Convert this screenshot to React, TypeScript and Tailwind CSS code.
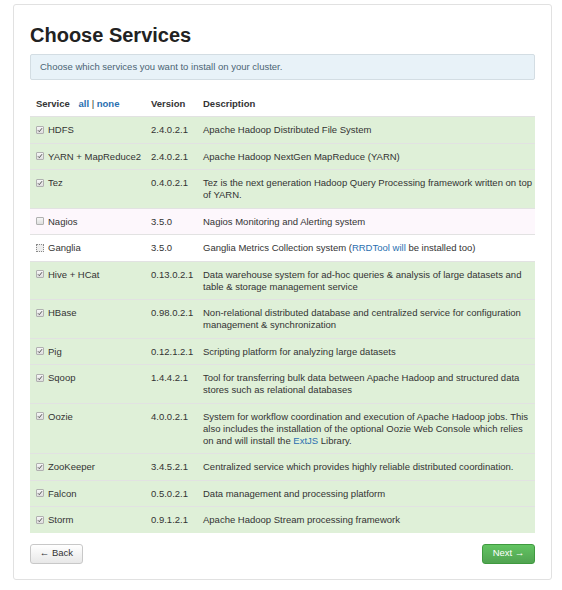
import React from "react";

type Row = {
  name: string;
  version: string;
  desc: React.ReactNode;
  state: "on" | "off" | "mixed";
};

const link = "text-[#2a6fb0]";

const rows: Row[] = [
  { name: "HDFS", version: "2.4.0.2.1", desc: "Apache Hadoop Distributed File System", state: "on" },
  { name: "YARN + MapReduce2", version: "2.4.0.2.1", desc: "Apache Hadoop NextGen MapReduce (YARN)", state: "on" },
  {
    name: "Tez",
    version: "0.4.0.2.1",
    desc: "Tez is the next generation Hadoop Query Processing framework written on top of YARN.",
    state: "on",
  },
  { name: "Nagios", version: "3.5.0", desc: "Nagios Monitoring and Alerting system", state: "off" },
  {
    name: "Ganglia",
    version: "3.5.0",
    desc: (
      <>
        Ganglia Metrics Collection system (<span className={link}>RRDTool</span>{" "}
        <span className={link}>will</span> be installed too)
      </>
    ),
    state: "mixed",
  },
  {
    name: "Hive + HCat",
    version: "0.13.0.2.1",
    desc: "Data warehouse system for ad-hoc queries & analysis of large datasets and table & storage management service",
    state: "on",
  },
  {
    name: "HBase",
    version: "0.98.0.2.1",
    desc: "Non-relational distributed database and centralized service for configuration management & synchronization",
    state: "on",
  },
  { name: "Pig", version: "0.12.1.2.1", desc: "Scripting platform for analyzing large datasets", state: "on" },
  {
    name: "Sqoop",
    version: "1.4.4.2.1",
    desc: "Tool for transferring bulk data between Apache Hadoop and structured data stores such as relational databases",
    state: "on",
  },
  {
    name: "Oozie",
    version: "4.0.0.2.1",
    desc: (
      <>
        System for workflow coordination and execution of Apache Hadoop jobs. This also includes the
        installation of the optional Oozie Web Console which relies on and will install the{" "}
        <span className={link}>ExtJS</span> Library.
      </>
    ),
    state: "on",
  },
  {
    name: "ZooKeeper",
    version: "3.4.5.2.1",
    desc: "Centralized service which provides highly reliable distributed coordination.",
    state: "on",
  },
  { name: "Falcon", version: "0.5.0.2.1", desc: "Data management and processing platform", state: "on" },
  { name: "Storm", version: "0.9.1.2.1", desc: "Apache Hadoop Stream processing framework", state: "on" },
];

function Check({ state }: { state: Row["state"] }) {
  if (state === "mixed") {
    return (
      <span className="mr-[4px] inline-block h-[8px] w-[8px] border border-dotted border-[#888] bg-[#eee] align-[-0.5px]" />
    );
  }
  return (
    <span className="mr-[4px] inline-block h-[8px] w-[8px] rounded-[1px] border border-[#b0b0b0] bg-gradient-to-b from-[#f6f6f6] to-[#dedede] align-[-0.5px]">
      {state === "on" && (
        <svg viewBox="0 0 8 8" className="block h-[6px] w-[6px]">
          <path d="M1.3 4.4 L3.1 6.2 L6.7 1.6" fill="none" stroke="#444" strokeWidth="1.2" />
        </svg>
      )}
    </span>
  );
}

function rowBg(state: Row["state"]) {
  if (state === "on") return "bg-[#dff0d8]";
  if (state === "off") return "bg-[#fdf7fc]";
  return "bg-white";
}

export default function App() {
  return (
    <div className="min-h-[590px] bg-white pt-[4px] font-['Liberation_Sans',Arial,sans-serif] text-[#333]">
      <div className="mx-[13px] w-[539px] rounded-[3px] border border-[#e1e1e1] px-[16px] pb-[15px] pt-[17px]">
        <h2 className="text-[20px] font-bold leading-[26px] text-[#222]">Choose Services</h2>

        <div className="mt-[6px] rounded-[2px] border border-[#d3dde3] bg-[#e8f2f8] px-[9px] py-[6px] text-[9.5px] leading-[12px] text-[#4b6474]">
          Choose which services you want to install on your cluster.
        </div>

        <table className="mt-[12px] w-full table-fixed border-collapse text-[9.5px] leading-[12px]">
          <colgroup>
            <col className="w-[115px]" />
            <col className="w-[52px]" />
            <col />
          </colgroup>
          <thead>
            <tr className="text-left font-bold text-[#333]">
              <th className="px-[6px] pb-[6px] pt-[6px] font-bold">
                Service <span className={`ml-[6px] ${link}`}>all</span>{" "}
                <span className="font-normal text-[#333]">|</span> <span className={link}>none</span>
              </th>
              <th className="px-[6px] pb-[6px] pt-[6px] font-bold">Version</th>
              <th className="px-[6px] pb-[6px] pt-[6px] font-bold">Description</th>
            </tr>
          </thead>
          <tbody>
            {rows.map((r) => (
              <tr key={r.name} className={`${rowBg(r.state)} border-t border-[#e2e2e2] align-top`}>
                <td className="whitespace-nowrap px-[6px] pb-[6.5px] pt-[7px]">
                  <Check state={r.state} />
                  {r.name}
                </td>
                <td className="px-[6px] pb-[6.5px] pt-[7px]">{r.version}</td>
                <td className="pb-[6.5px] pl-[6px] pr-0 pt-[7px]">{r.desc}</td>
              </tr>
            ))}
          </tbody>
        </table>

        <div className="mt-[11px] flex justify-between">
          <button
            type="button"
            className="h-[20px] w-[53px] rounded-[3px] border border-[#c8c8c8] bg-gradient-to-b from-white to-[#e8e8e8] text-[9.5px] text-[#333]"
          >
            ← Back
          </button>
          <button
            type="button"
            className="h-[20px] w-[53px] rounded-[3px] border border-[#3f9a3f] bg-gradient-to-b from-[#62c462] to-[#51a351] text-[9.5px] text-white"
          >
            Next →
          </button>
        </div>
      </div>
    </div>
  );
}
